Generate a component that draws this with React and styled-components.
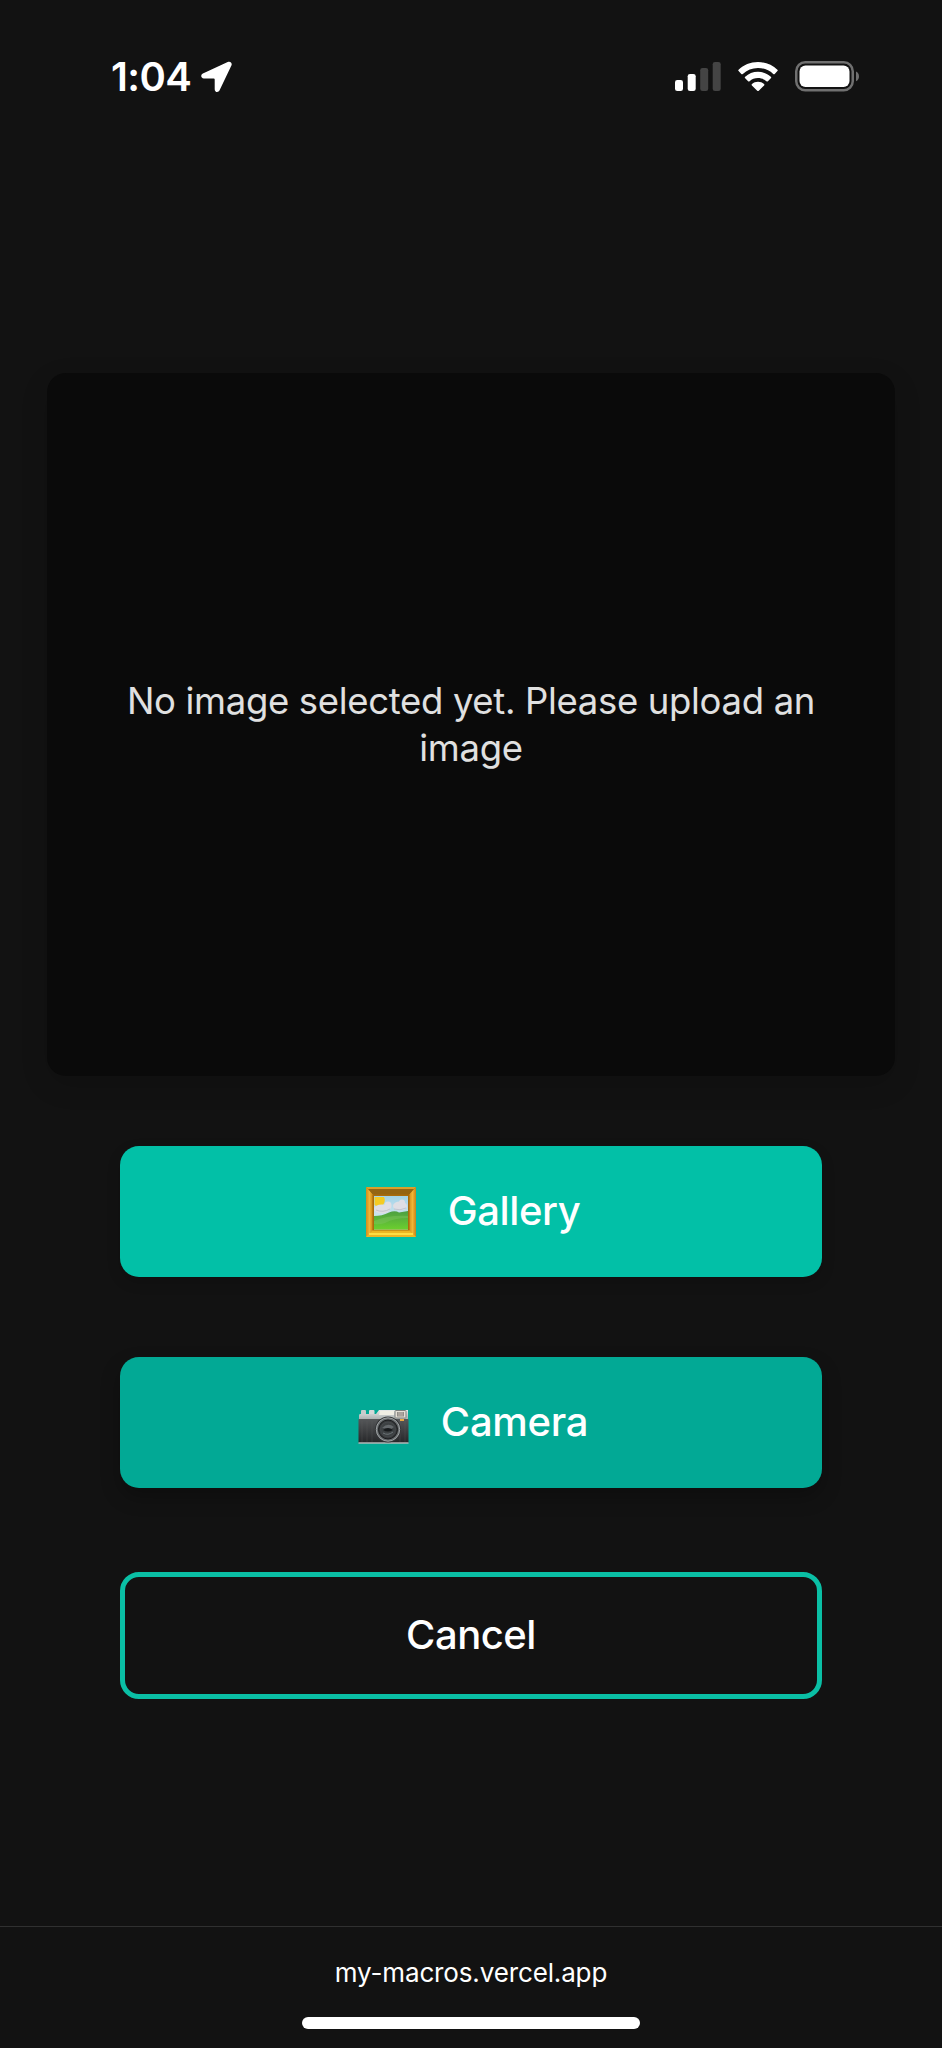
import React from "react";
import styled, { createGlobalStyle } from "styled-components";

const GlobalStyle = createGlobalStyle`
  * { box-sizing: border-box; }
  body {
    margin: 0;
    background: #121212;
    font-family: Inter, "Liberation Sans", sans-serif;
  }
`;

const Screen = styled.div`
  display: flex;
  flex-direction: column;
  width: 942px;
  height: 2048px;
  overflow: hidden;
  background: #121212;
  color: #fff;
`;

const StatusBar = styled.header`
  display: flex;
  justify-content: space-between;
  height: 153px;
  padding: 53px 82px 0 111px;
`;

const StatusGroup = styled.div`
  display: flex;
  align-items: center;
  height: ${(p) => p.$height}px;
  gap: ${(p) => p.$gap}px;
`;

const Time = styled.span`
  width: 80px;
  font-size: 40px;
  font-weight: 600;
  line-height: 48px;
  letter-spacing: -0.6px;
  white-space: nowrap;
`;

const Main = styled.main`
  display: flex;
  flex: 1;
  flex-direction: column;
  align-items: center;
  padding-top: 220px;
`;

const Preview = styled.section`
  display: flex;
  align-items: center;
  justify-content: center;
  width: 848px;
  height: 703px;
  padding: 1px 60px 0;
  border-radius: 19px;
  background: #0a0a0a;
  box-shadow: 0 9px 28px rgba(0, 0, 0, 0.14);
`;

const Message = styled.p`
  margin: 0;
  color: #e0e0e0;
  font-size: 36.5px;
  line-height: 47px;
  letter-spacing: -0.33px;
  text-align: center;
`;

const Actions = styled.div`
  display: flex;
  flex-direction: column;
  width: 702px;
  padding-top: 70px;
`;

const Button = styled.button`
  display: flex;
  align-items: center;
  justify-content: center;
  gap: 32px;
  width: 100%;
  height: 131px;
  padding: 0 0 1px 4px;
  border: 0;
  border-radius: 19px;
  background: ${(p) => p.$fill};
  box-shadow: ${(p) => p.$shadow};
  color: #fff;
  font-family: inherit;
  font-size: 40px;
  font-weight: 500;
  line-height: 48px;
  letter-spacing: ${(p) => p.$tracking}px;

  & + & { margin-top: 80px; }

  svg { margin-top: 2px; }
`;

const ButtonLabel = styled.span`
  margin-top: -1px;
`;

const OutlineButton = styled(Button)`
  height: 127px;
  padding: 0 0 1px;
  border: 5px solid #0abfa5;

  ${Button} + & { margin-top: 84px; }
`;

const Footer = styled.footer`
  display: flex;
  flex-direction: column;
  align-items: center;
  height: 122px;
  padding-top: 29px;
  border-top: 1px solid #303030;
`;

const Address = styled.span`
  font-size: 26px;
  line-height: 34px;
  letter-spacing: -0.14px;
`;

const HomeIndicator = styled.div`
  width: 338px;
  height: 12px;
  margin-top: 27px;
  border-radius: 6px;
  background: #fff;
`;

const LocationArrow = () => (
  <svg width="32" height="32" viewBox="0.5 0 32 32" fill="#fff">
    <path d="M27.2 1.1 2.4 12.6C-.2 13.9.4 17.4 3.3 17.4H13.2Q14.2 17.4 14.2 18.4V28.2C14.2 31.4 17.8 32 19.1 29.3L30.9 4.5C32 2 29.8-.1 27.2 1.1Z" />
  </svg>
);

const Signal = () => (
  <svg width="46" height="30" viewBox="0 0 46 30">
    <rect x="0" y="18" width="8" height="11" rx="2.3" fill="#fff" />
    <rect x="12.7" y="12" width="8" height="17" rx="2.3" fill="#fff" />
    <rect x="25.2" y="6" width="8" height="23" rx="2.3" fill="#444" />
    <rect x="37.7" y="0" width="8" height="29" rx="2.3" fill="#444" />
  </svg>
);

const Wifi = () => (
  <svg width="40" height="30" viewBox="0 0 40 30" fill="#fff">
    <path d="M20 0C12.3 0 5.5 3 .6 7.700Q-.1 8.400.6 9.100L3.300 11.900Q4 12.600 4.800 11.900C8.800 8.200 14.100 6 20 6s11.200 2.200 15.200 5.900q.8.700 1.500 0l2.700-2.800q.7-.7 0-1.400C34.500 3 27.700 0 20 0Z" />
    <path d="M20 9.800c-5 0-9.500 1.900-12.800 5q-.8.700 0 1.500l2.900 2.900q.7.700 1.500 0c2.200-2 5.200-3.200 8.400-3.200s6.200 1.200 8.400 3.200q.8.700 1.500 0l2.900-2.900q.8-.8 0-1.500C29.500 11.700 25 9.800 20 9.800Z" />
    <path d="M20 19.800c-2.300 0-4.400.8-6 2.100q-.9.700-.1 1.500l5.300 5.300q.8.800 1.600 0l5.300-5.300q.8-.8-.1-1.500c-1.600-1.300-3.700-2.100-6-2.100Z" />
  </svg>
);

const Battery = () => (
  <svg width="65" height="31" viewBox="0 0 65 31">
    <rect x="1.25" y="1.25" width="56.500" height="28" rx="9" fill="none" stroke="#707070" strokeWidth="2.500" />
    <rect x="4.500" y="4.500" width="50" height="21.500" rx="6" fill="#fff" />
    <path d="M61 10.500C65 12 65 18.800 61 20.300Z" fill="#707070" />
  </svg>
);

const FramedPicture = () => (
  <svg width="50" height="50" viewBox="0 0 50 50">
    <defs>
      <linearGradient id="gold" x1="0" y1="0" x2="1" y2="0">
        <stop offset="0" stopColor="#d08d1b" />
        <stop offset=".5" stopColor="#f0b536" />
        <stop offset="1" stopColor="#c98316" />
      </linearGradient>
      <linearGradient id="sky" x1="0" y1="0" x2="0" y2="1">
        <stop offset="0" stopColor="#a3d3e8" />
        <stop offset="1" stopColor="#e7eff2" />
      </linearGradient>
      <linearGradient id="grass" x1="0" y1="0" x2="0" y2="1">
        <stop offset="0" stopColor="#4d9f43" />
        <stop offset="1" stopColor="#6bcf2e" />
      </linearGradient>
    </defs>
    <rect width="50" height="50" rx="1" fill="#dda021" />
    <path d="M0 0H50L43 8H7Z" fill="#946513" />
    <path d="M0 0H50L48 2H2Z" fill="#d9a02b" />
    <path d="M0 0 7 8V43L0 50Z" fill="url(#gold)" />
    <path d="M50 0 43 8V43L50 50Z" fill="url(#gold)" />
    <path d="M0 50 7 43H43L50 50Z" fill="#edb624" />
    <path d="M3 47H47" stroke="#ffdd43" strokeWidth="2" />
    <rect x="6.500" y="7.500" width="37" height="36" fill="#a96c0c" />
    <rect x="8" y="9" width="34" height="33.500" fill="url(#sky)" />
    <path d="M8.500 10H18Q20 14 17 18Q13 21 8.500 18Z" fill="#f5cb22" />
    <g fill="#dfdee4">
      <ellipse cx="16" cy="22" rx="8" ry="4.500" />
      <ellipse cx="22" cy="18.500" rx="3.500" ry="4" />
      <ellipse cx="34" cy="19" rx="7" ry="4.500" />
      <circle cx="36" cy="15.500" r="3" />
    </g>
    <path d="M10 23Q17 26 24 22M28 22Q34 24 40 21" stroke="#c3c5d0" fill="none" />
    <path d="M8 29Q16 29 23 25.500Q29 23 33 25.500L42 24V42.500H8Z" fill="url(#grass)" />
    <path d="M8 34Q22 28 42 29V31Q28 31 19 36Q14 38 8 37Z" fill="#83c664" opacity=".4" />
  </svg>
);

const CameraPicture = () => (
  <svg width="51" height="50" viewBox="0 0 51 50">
    <defs>
      <linearGradient id="metal" x1="0" y1="0" x2="0" y2="1">
        <stop offset="0" stopColor="#e5e8e8" />
        <stop offset="1" stopColor="#a7acac" />
      </linearGradient>
      <linearGradient id="leather" x1="0" y1="0" x2="0" y2="1">
        <stop offset="0" stopColor="#555759" />
        <stop offset="1" stopColor="#252628" />
      </linearGradient>
    </defs>
    <g transform="translate(0 1)">
      <rect x="3" y="11" width="5" height="6" rx="1" fill="#c7cccc" />
      <rect x="11" y="11" width="5.500" height="6" rx="1" fill="#d5d8d8" />
      <path d="M2 15H18L21 11H50V21H1V17Q1 15 2 15Z" fill="url(#metal)" />
      <rect x=".5" y="20" width="50" height="24" rx=".7" fill="url(#leather)" />
      <path d="M4 22V43M9 22V43M14 22V43M42 22V43M47 22V43" stroke="#666" opacity=".25" />
      <path d="M.5 44H50.500" stroke="#b4b9b9" strokeWidth="1.500" />
      <path d="M22 12H36V16H21Z" fill="#f0eee4" />
      <rect x="37" y="11.500" width="11" height="7.500" rx=".7" fill="#e4dfd7" stroke="#7c807f" />
      <rect x="39" y="13" width="7" height="4.500" fill="#918d88" />
      <path d="M40 14H45M40 16H45" stroke="#d6cfc4" strokeWidth=".7" />
      <rect x="42" y="20" width="4" height="2" fill="#e7a943" />
      <circle cx="30" cy="30.500" r="13" fill="#353739" />
      <circle cx="30" cy="30.500" r="11.700" fill="#676b6d" stroke="#9da1a3" />
      <circle cx="30" cy="30.500" r="9.500" fill="#343638" stroke="#191b1d" />
      <circle cx="30" cy="30.500" r="7.500" fill="#3d4143" stroke="#4b4f51" strokeWidth=".7" />
      <path d="M24 29Q30 23 36 28L33 30Z" fill="#64696c" />
      <path d="M25 31Q30 27 35 31Q30 34 25 31Z" fill="#171a1c" />
      <path d="M25 34Q30 37 35 33" stroke="#6c7478" fill="none" />
    </g>
  </svg>
);

export default function App() {
  return (
    <>
      <GlobalStyle />
      <Screen>
        <StatusBar>
          <StatusGroup $gap={10} $height={48}>
            <Time>1:04</Time>
            <LocationArrow />
          </StatusGroup>
          <StatusGroup $gap={17} $height={47}>
            <Signal />
            <Wifi />
            <Battery />
          </StatusGroup>
        </StatusBar>
        <Main>
          <Preview>
            <Message>No image selected yet. Please upload an image</Message>
          </Preview>
          <Actions>
            <Button $fill="#02c0a7" $shadow="0 5px 14px rgba(0, 0, 0, 0.16)" $tracking={-0.4}>
              <FramedPicture />
              <ButtonLabel>Gallery</ButtonLabel>
            </Button>
            <Button $fill="#02a995" $shadow="0 9px 19px rgba(0, 0, 0, 0.26)" $tracking={-0.3}>
              <CameraPicture />
              <ButtonLabel>Camera</ButtonLabel>
            </Button>
            <OutlineButton $fill="transparent" $shadow="none" $tracking={-0.5}>
              Cancel
            </OutlineButton>
          </Actions>
        </Main>
        <Footer>
          <Address>my-macros.vercel.app</Address>
          <HomeIndicator />
        </Footer>
      </Screen>
    </>
  );
}
